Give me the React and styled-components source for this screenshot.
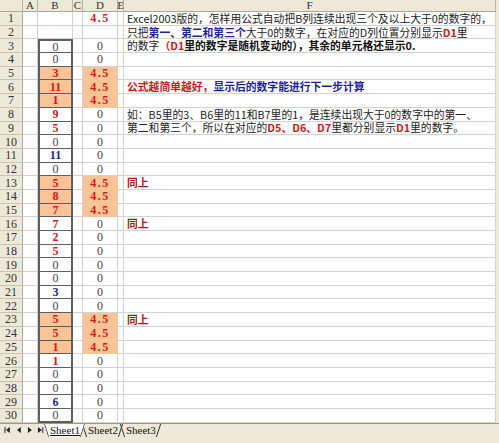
import React from "react";
import styled, { createGlobalStyle } from "styled-components";

const ROW_H = 13.7;
const FILLED = [5, 6, 7, 13, 14, 15, 23, 24, 25];

// column B values: [text, tone]
const B_VALUES = {
  3: ["0"], 4: ["0"], 5: ["3", "red"], 6: ["11", "red"], 7: ["1", "red"],
  8: ["9", "red"], 9: ["5", "red"], 10: ["0"], 11: ["11", "blue"], 12: ["0"],
  13: ["5", "red"], 14: ["8", "red"], 15: ["7", "red"], 16: ["7", "red"],
  17: ["2", "red"], 18: ["5", "red"], 19: ["0"], 20: ["0"], 21: ["3", "blue"],
  22: ["0"], 23: ["5", "red"], 24: ["5", "red"], 25: ["1", "red"],
  26: ["1", "red"], 27: ["0"], 28: ["0"], 29: ["6", "blue"], 30: ["0"],
};

const TONES = {
  red: "#d01818",
  blue: "#1d1da6",
  dark: "#b01414",
};

const GlobalStyle = createGlobalStyle`
  html, body {
    margin: 0;
    padding: 0;
    background: #ece9d8;
    overflow: hidden;
  }
`;

const Page = styled.div`
  width: 499px;
  height: 443px;
  display: flex;
  flex-direction: column;
  background: #ece9d8;
`;

const Sheet = styled.div`
  display: grid;
  grid-template-columns: 23px 15px 35px 10px 35px 6px 372px;
  grid-template-rows: 12px repeat(30, ${ROW_H}px);
  width: 496px;
  background: #fff;
`;

const HeadCell = styled.div`
  box-sizing: border-box;
  background: #ece9d8;
  border-right: 1px solid #b9b5a2;
  border-bottom: 1px solid #aca899;
  color: #333;
  font: 11px "Liberation Serif", serif;
  display: flex;
  align-items: center;
  justify-content: center;
  line-height: 1;
`;

const RowHead = styled(HeadCell)`
  border-right: 1px solid #aca899;
  border-bottom: 1px solid #c9c5b2;
  font-size: 12px;
`;

const Cell = styled.div`
  box-sizing: border-box;
  display: flex;
  align-items: center;
  justify-content: ${(p) => (p.$center ? "center" : "flex-start")};
  padding: ${(p) => (p.$center ? "0" : "0 0 0 3px")};
  white-space: nowrap;
  overflow: visible;
  background: ${(p) => (p.$fill ? "#fbc496" : "#fff")};
  border-right: 1px solid ${(p) => (p.$fill ? "#fbc496" : "#d2d2d2")};
  border-bottom: 1px solid ${(p) => (p.$fill ? "#fbc496" : "#d2d2d2")};
`;

const BoxCell = styled(Cell)`
  border-left: 2px solid #5e5e5e;
  border-right: 2px solid #5e5e5e;
  border-bottom: ${(p) => (p.$last ? 2 : 1)}px solid #5e5e5e;
  border-top: ${(p) => (p.$first ? "2px solid #5e5e5e" : "none")};
`;

const Num = styled.span`
  font-family: "Liberation Serif", serif;
  font-size: 12px;
  line-height: 1;
  letter-spacing: ${(p) => (p.$wide ? "1.5px" : "0")};
  font-weight: ${(p) => (p.$tone ? 700 : 400)};
  color: ${(p) => (p.$tone ? TONES[p.$tone] : "#444")};
`;

const Note = styled.span`
  font-family: "Noto Sans CJK SC", "Noto Sans", sans-serif;
  font-size: 10.8px;
  color: #222;
  line-height: 1;
`;

const Mark = styled.b`
  font-weight: 700;
  color: ${(p) => (p.$tone ? TONES[p.$tone] : "#111")};
`;

const TabBar = styled.div`
  height: 14px;
  display: flex;
  align-items: stretch;
  background: #ece9d8;
  border-top: 1px solid #9d9a8c;
  box-sizing: border-box;
`;

const Nav = styled.div`
  display: flex;
  align-items: center;
  gap: 3px;
  padding: 0 0 0 4px;
  width: 44px;
  box-sizing: border-box;
`;

const Tabs = styled.div`
  display: flex;
  align-items: stretch;
`;

const Tab = styled.span`
  position: relative;
  padding: 0 5px 0 6px;
  margin-right: -3px;
  font: 11px "Liberation Serif", serif;
  line-height: 12px;
  color: #111;
  text-decoration: ${(p) => (p.$active ? "underline" : "none")};
  background: ${(p) => (p.$active ? "#fff" : "transparent")};
  clip-path: ${(p) =>
    p.$active ? "polygon(0 0, 100% 0, calc(100% - 4px) 100%, 4px 100%)" : "none"};
  z-index: ${(p) => (p.$active ? 1 : 0)};

  &::before,
  &::after {
    content: "";
    position: absolute;
    top: 0;
    bottom: 0;
    width: 1px;
    background: #333;
  }
  &::before {
    left: 2px;
    transform: skewX(18deg);
  }
  &::after {
    right: 2px;
    transform: skewX(-18deg);
  }
`;

const Status = styled.div`
  flex: 1;
  background: #ece9d8;
`;

function NavIcon({ dir, bar }) {
  const pts = dir === "left" ? "6,1 6,7 2,4" : "2,1 2,7 6,4";
  return (
    <svg width="8" height="8" viewBox="0 0 8 8">
      <polygon points={pts} fill="#222" />
      {bar && <rect x={dir === "left" ? 0.5 : 6.5} y="1" width="1" height="6" fill="#222" />}
    </svg>
  );
}

const F_TEXT = {
  1: <>Excel2003版的，怎样用公式自动把B列连续出现三个及以上大于0的数字的，</>,
  2: (
    <>
      只把<Mark $tone="blue">第一、第二和第三个</Mark>大于0的数字，在对应的D列位置分别显示<Mark $tone="red">D1</Mark>里
    </>
  ),
  3: (
    <>
      的数字<Mark $tone="red">（D1</Mark><Mark>里的数字是随机变动的），其余的单元格还显示0.</Mark>
    </>
  ),
  6: (
    <>
      <Mark $tone="red">公式越简单越好，</Mark><Mark $tone="blue">显示后的数字能进行下一步计算</Mark>
    </>
  ),
  8: <>如：B5里的3、B6里的11和B7里的1，是连续出现大于0的数字中的第一、</>,
  9: (
    <>
      第二和第三个，所以在对应的<Mark $tone="red">D5、D6、D7</Mark>里都分别显示<Mark $tone="red">D1</Mark>里的数字。
    </>
  ),
  13: <Mark $tone="dark">同上</Mark>,
  16: <Mark $tone="dark">同上</Mark>,
  23: <Mark $tone="dark">同上</Mark>,
};

function Row({ n }) {
  const fill = FILLED.includes(n);
  const b = B_VALUES[n];
  let d = null;
  if (n === 1 || fill) d = <Num $tone="red" $wide>4.5</Num>;
  else if (n >= 3) d = <Num>0</Num>;

  return (
    <>
      <RowHead>{n}</RowHead>
      <Cell />
      {b ? (
        <BoxCell $center $fill={fill} $first={n === 3} $last={n === 30}>
          <Num $tone={b[1]}>{b[0]}</Num>
        </BoxCell>
      ) : (
        <Cell $center />
      )}
      <Cell />
      <Cell $center $fill={fill}>
        {d}
      </Cell>
      <Cell />
      <Cell>{F_TEXT[n] && <Note>{F_TEXT[n]}</Note>}</Cell>
    </>
  );
}

export default function App() {
  const rows = Array.from({ length: 30 }, (_, i) => i + 1);
  return (
    <Page>
      <GlobalStyle />
      <Sheet>
        <HeadCell />
        {["A", "B", "C", "D", "E", "F"].map((c) => (
          <HeadCell key={c}>{c}</HeadCell>
        ))}
        {rows.map((n) => (
          <Row key={n} n={n} />
        ))}
      </Sheet>
      <TabBar>
        <Nav>
          <NavIcon dir="left" bar />
          <NavIcon dir="left" />
          <NavIcon dir="right" />
          <NavIcon dir="right" bar />
        </Nav>
        <Tabs>
          <Tab $active>Sheet1</Tab>
          <Tab>Sheet2</Tab>
          <Tab>Sheet3</Tab>
        </Tabs>
      </TabBar>
      <Status />
    </Page>
  );
}
